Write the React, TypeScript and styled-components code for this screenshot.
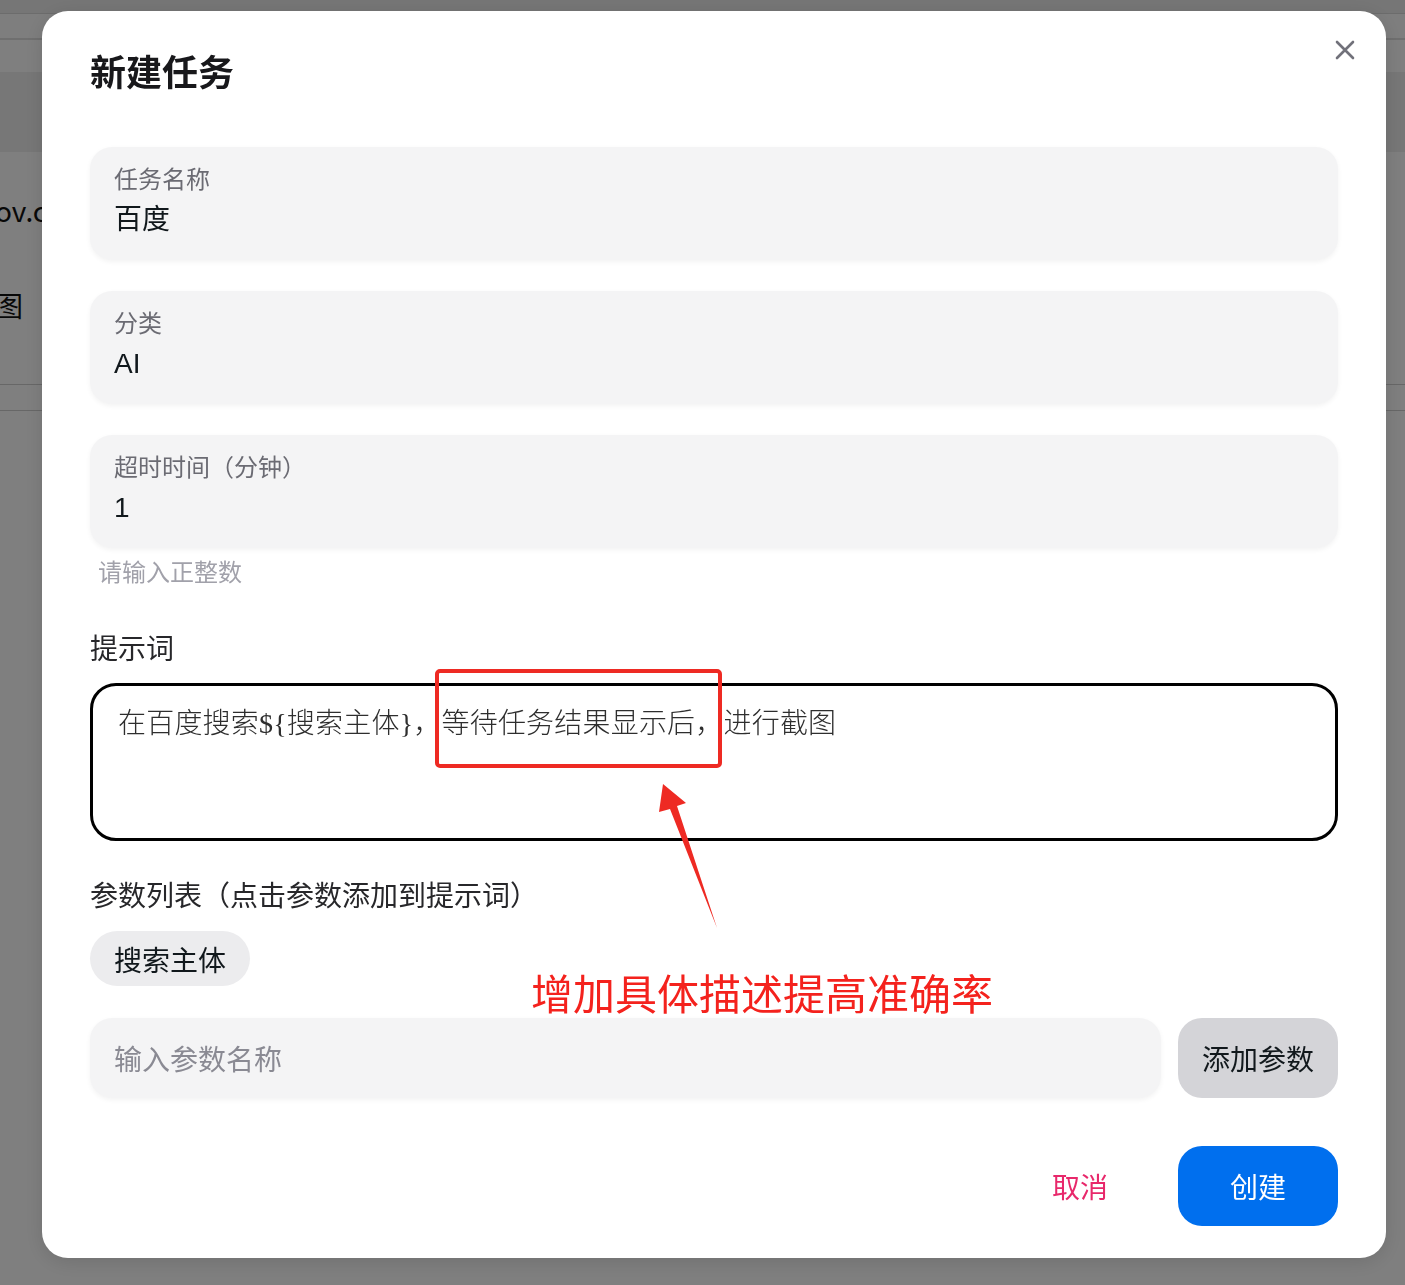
import React from "react";
import styled, { createGlobalStyle } from "styled-components";

const GlobalStyle = createGlobalStyle`
  html, body { margin: 0; padding: 0; }
  body {
    width: 1405px;
    height: 1285px;
    overflow: hidden;
    font-family: "Noto Sans CJK SC", "Noto Sans", sans-serif;
    background: #ffffff;
  }
`;

const SANS = `"Noto Sans CJK SC", "Noto Sans", sans-serif`;
const LATIN_SANS = `"Liberation Sans", "Noto Sans CJK SC", sans-serif`;

/* ---------- background page (dimmed by overlay) ---------- */
const Page = styled.div`
  display: flex;
  flex-direction: column;
  width: 1405px;
  height: 1285px;
  background: #fefefe;
`;
const TopStrip = styled.div`
  height: 13px;
  background: #ececec;
  border-bottom: 1px solid #d8d8d8;
`;
const TabRow = styled.div`
  height: 24px;
  background: #fcfcfc;
  border-bottom: 2px solid #dedede;
`;
const Spacer = styled.div<{ $h: number }>`
  height: ${(p) => p.$h}px;
`;
const TableHead = styled.div`
  height: 80px;
  background: #eeeeee;
`;
const TableBody = styled.div`
  height: 232px;
  width: 42px;
  overflow: hidden;
  display: flex;
  flex-direction: column;
  padding-top: 28px;
  box-sizing: border-box;
`;
const Cell = styled.div<{ $mt: number }>`
  margin-top: ${(p) => p.$mt}px;
  margin-left: -5px;
  font-family: ${SANS};
  font-size: 28px;
  line-height: 40px;
  color: #111;
  white-space: nowrap;
`;
const RowLine = styled.div`
  height: 25px;
  border-top: 1px solid #cfcfcf;
  border-bottom: 1px solid #cfcfcf;
`;

/* ---------- overlay + modal ---------- */
const Backdrop = styled.div`
  position: fixed;
  inset: 0;
  background: rgba(0, 0, 0, 0.5);
  display: flex;
  align-items: flex-start;
  justify-content: flex-start;
  padding: 11px 0 0 42px;
`;

const Modal = styled.div`
  position: relative;
  box-sizing: border-box;
  width: 1344px;
  height: 1247px;
  background: #ffffff;
  border-radius: 26px;
  box-shadow: 0 4px 20px rgba(0, 0, 0, 0.12);
  padding: 34px 48px 31px 48px;
  display: flex;
  flex-direction: column;
  font-family: ${SANS};
`;

const Title = styled.h2`
  margin: 0;
  font-size: 36px;
  line-height: 50px;
  font-weight: 700;
  color: #18181b;
`;

const CloseButton = styled.button`
  position: absolute;
  top: 26px;
  right: 28px;
  width: 26px;
  height: 26px;
  border: none;
  background: transparent;
  padding: 0;
  display: flex;
  align-items: center;
  justify-content: center;
  cursor: pointer;
`;

const Body = styled.div`
  display: flex;
  flex-direction: column;
  margin-top: 52px;
`;

const FieldCard = styled.label<{ $mt?: number }>`
  display: flex;
  flex-direction: column;
  box-sizing: border-box;
  height: 113px;
  margin-top: ${(p) => p.$mt ?? 0}px;
  padding: 14px 24px 0 24px;
  background: #f4f4f5;
  border-radius: 22px;
  box-shadow: 0 2px 5px rgba(0, 0, 0, 0.05);
`;

const FieldLabel = styled.span`
  font-size: 24px;
  line-height: 34px;
  color: #6b6b73;
`;

const FieldValue = styled.input`
  border: none;
  outline: none;
  background: transparent;
  padding: 0;
  margin-top: 5px;
  font-family: ${LATIN_SANS};
  font-size: 28px;
  line-height: 40px;
  height: 40px;
  color: #11181c;
`;

const Helper = styled.div`
  margin-top: 6px;
  padding-left: 8px;
  font-size: 24px;
  line-height: 34px;
  color: #a1a1aa;
`;

const SectionLabel = styled.div<{ $mt: number }>`
  margin-top: ${(p) => p.$mt}px;
  font-size: 28px;
  line-height: 40px;
  color: #27272a;
`;

const PromptArea = styled.textarea`
  margin-top: 16px;
  box-sizing: border-box;
  width: 100%;
  height: 158px;
  border: 3px solid #000;
  border-radius: 26px;
  padding: 18px 25px 12px 25px;
  resize: none;
  outline: none;
  font-family: "Liberation Serif", "Noto Sans CJK SC", serif;
  font-weight: 300;
  font-size: 28px;
  line-height: 40px;
  letter-spacing: 0.2px;
  color: #2e2e2e;
  background: #fff;
`;

const ChipRow = styled.div`
  display: flex;
  gap: 12px;
  margin-top: 17px;
`;

const Chip = styled.button`
  height: 55px;
  padding: 0 24px;
  border: none;
  border-radius: 28px;
  background: #ececee;
  font-family: ${SANS};
  font-size: 28px;
  color: #11181c;
  cursor: pointer;
`;

const ParamRow = styled.div`
  display: flex;
  gap: 17px;
  margin-top: 32px;
`;

const ParamInput = styled.input`
  flex: 1;
  height: 80px;
  box-sizing: border-box;
  border: none;
  outline: none;
  border-radius: 22px;
  background: #f4f4f5;
  box-shadow: 0 2px 5px rgba(0, 0, 0, 0.05);
  padding: 0 24px;
  font-family: ${SANS};
  font-size: 28px;
  color: #11181c;
  &::placeholder {
    color: #8a8a93;
  }
`;

const Button = styled.button<{ $variant: "default" | "primary" | "ghost" }>`
  width: 160px;
  height: 80px;
  border: none;
  border-radius: 24px;
  font-family: ${SANS};
  font-size: 28px;
  cursor: pointer;
  background: ${(p) =>
    p.$variant === "primary" ? "#006fee" : p.$variant === "default" ? "#d4d4d8" : "transparent"};
  color: ${(p) =>
    p.$variant === "primary" ? "#ffffff" : p.$variant === "default" ? "#11181c" : "#e8286b"};
`;

const Footer = styled.div`
  display: flex;
  justify-content: flex-end;
  gap: 18px;
  margin-top: 48px;
`;

/* ---------- annotation overlay ---------- */
const HighlightBox = styled.div`
  position: absolute;
  left: 393px;
  top: 658px;
  width: 287px;
  height: 99px;
  box-sizing: border-box;
  border: 4px solid #ee2a23;
  border-radius: 5px;
  pointer-events: none;
`;

const ArrowSvg = styled.svg`
  position: absolute;
  left: 608px;
  top: 769px;
  width: 80px;
  height: 155px;
  pointer-events: none;
`;

const AnnotationText = styled.div`
  position: absolute;
  left: 489px;
  top: 952px;
  font-family: ${SANS};
  font-size: 42px;
  line-height: 58px;
  color: #f4221d;
  white-space: nowrap;
  pointer-events: none;
`;

export default function App() {
  return (
    <>
      <GlobalStyle />
      <Page>
        <TopStrip />
        <TabRow />
        <Spacer $h={32} />
        <TableHead />
        <TableBody>
          <Cell $mt={10}>ov.cn</Cell>
          <Cell $mt={55}>图</Cell>
        </TableBody>
        <RowLine />
      </Page>
      <Backdrop>
        <Modal>
          <Title>新建任务</Title>
          <CloseButton aria-label="关闭">
            <svg width="22" height="22" viewBox="0 0 22 22">
              <path
                d="M3 3 L19 19 M19 3 L3 19"
                stroke="#71717a"
                strokeWidth="2.6"
                strokeLinecap="round"
              />
            </svg>
          </CloseButton>
          <Body>
            <FieldCard>
              <FieldLabel>任务名称</FieldLabel>
              <FieldValue defaultValue="百度" />
            </FieldCard>
            <FieldCard $mt={31}>
              <FieldLabel>分类</FieldLabel>
              <FieldValue defaultValue="AI" />
            </FieldCard>
            <FieldCard $mt={31}>
              <FieldLabel>超时时间（分钟）</FieldLabel>
              <FieldValue defaultValue="1" />
            </FieldCard>
            <Helper>请输入正整数</Helper>
            <SectionLabel $mt={39}>提示词</SectionLabel>
            <PromptArea defaultValue={"在百度搜索${搜索主体}，等待任务结果显示后，进行截图"} />
            <SectionLabel $mt={33}>参数列表（点击参数添加到提示词）</SectionLabel>
            <ChipRow>
              <Chip>搜索主体</Chip>
            </ChipRow>
            <ParamRow>
              <ParamInput placeholder="输入参数名称" />
              <Button $variant="default">添加参数</Button>
            </ParamRow>
            <Footer>
              <Button $variant="ghost">取消</Button>
              <Button $variant="primary">创建</Button>
            </Footer>
          </Body>
          <HighlightBox />
          <ArrowSvg viewBox="650 780 80 155">
            <polygon
              points="663,784 686,803 677,806 717,928 670,809 659,812"
              fill="#ee2a23"
            />
          </ArrowSvg>
          <AnnotationText>增加具体描述提高准确率</AnnotationText>
        </Modal>
      </Backdrop>
    </>
  );
}
